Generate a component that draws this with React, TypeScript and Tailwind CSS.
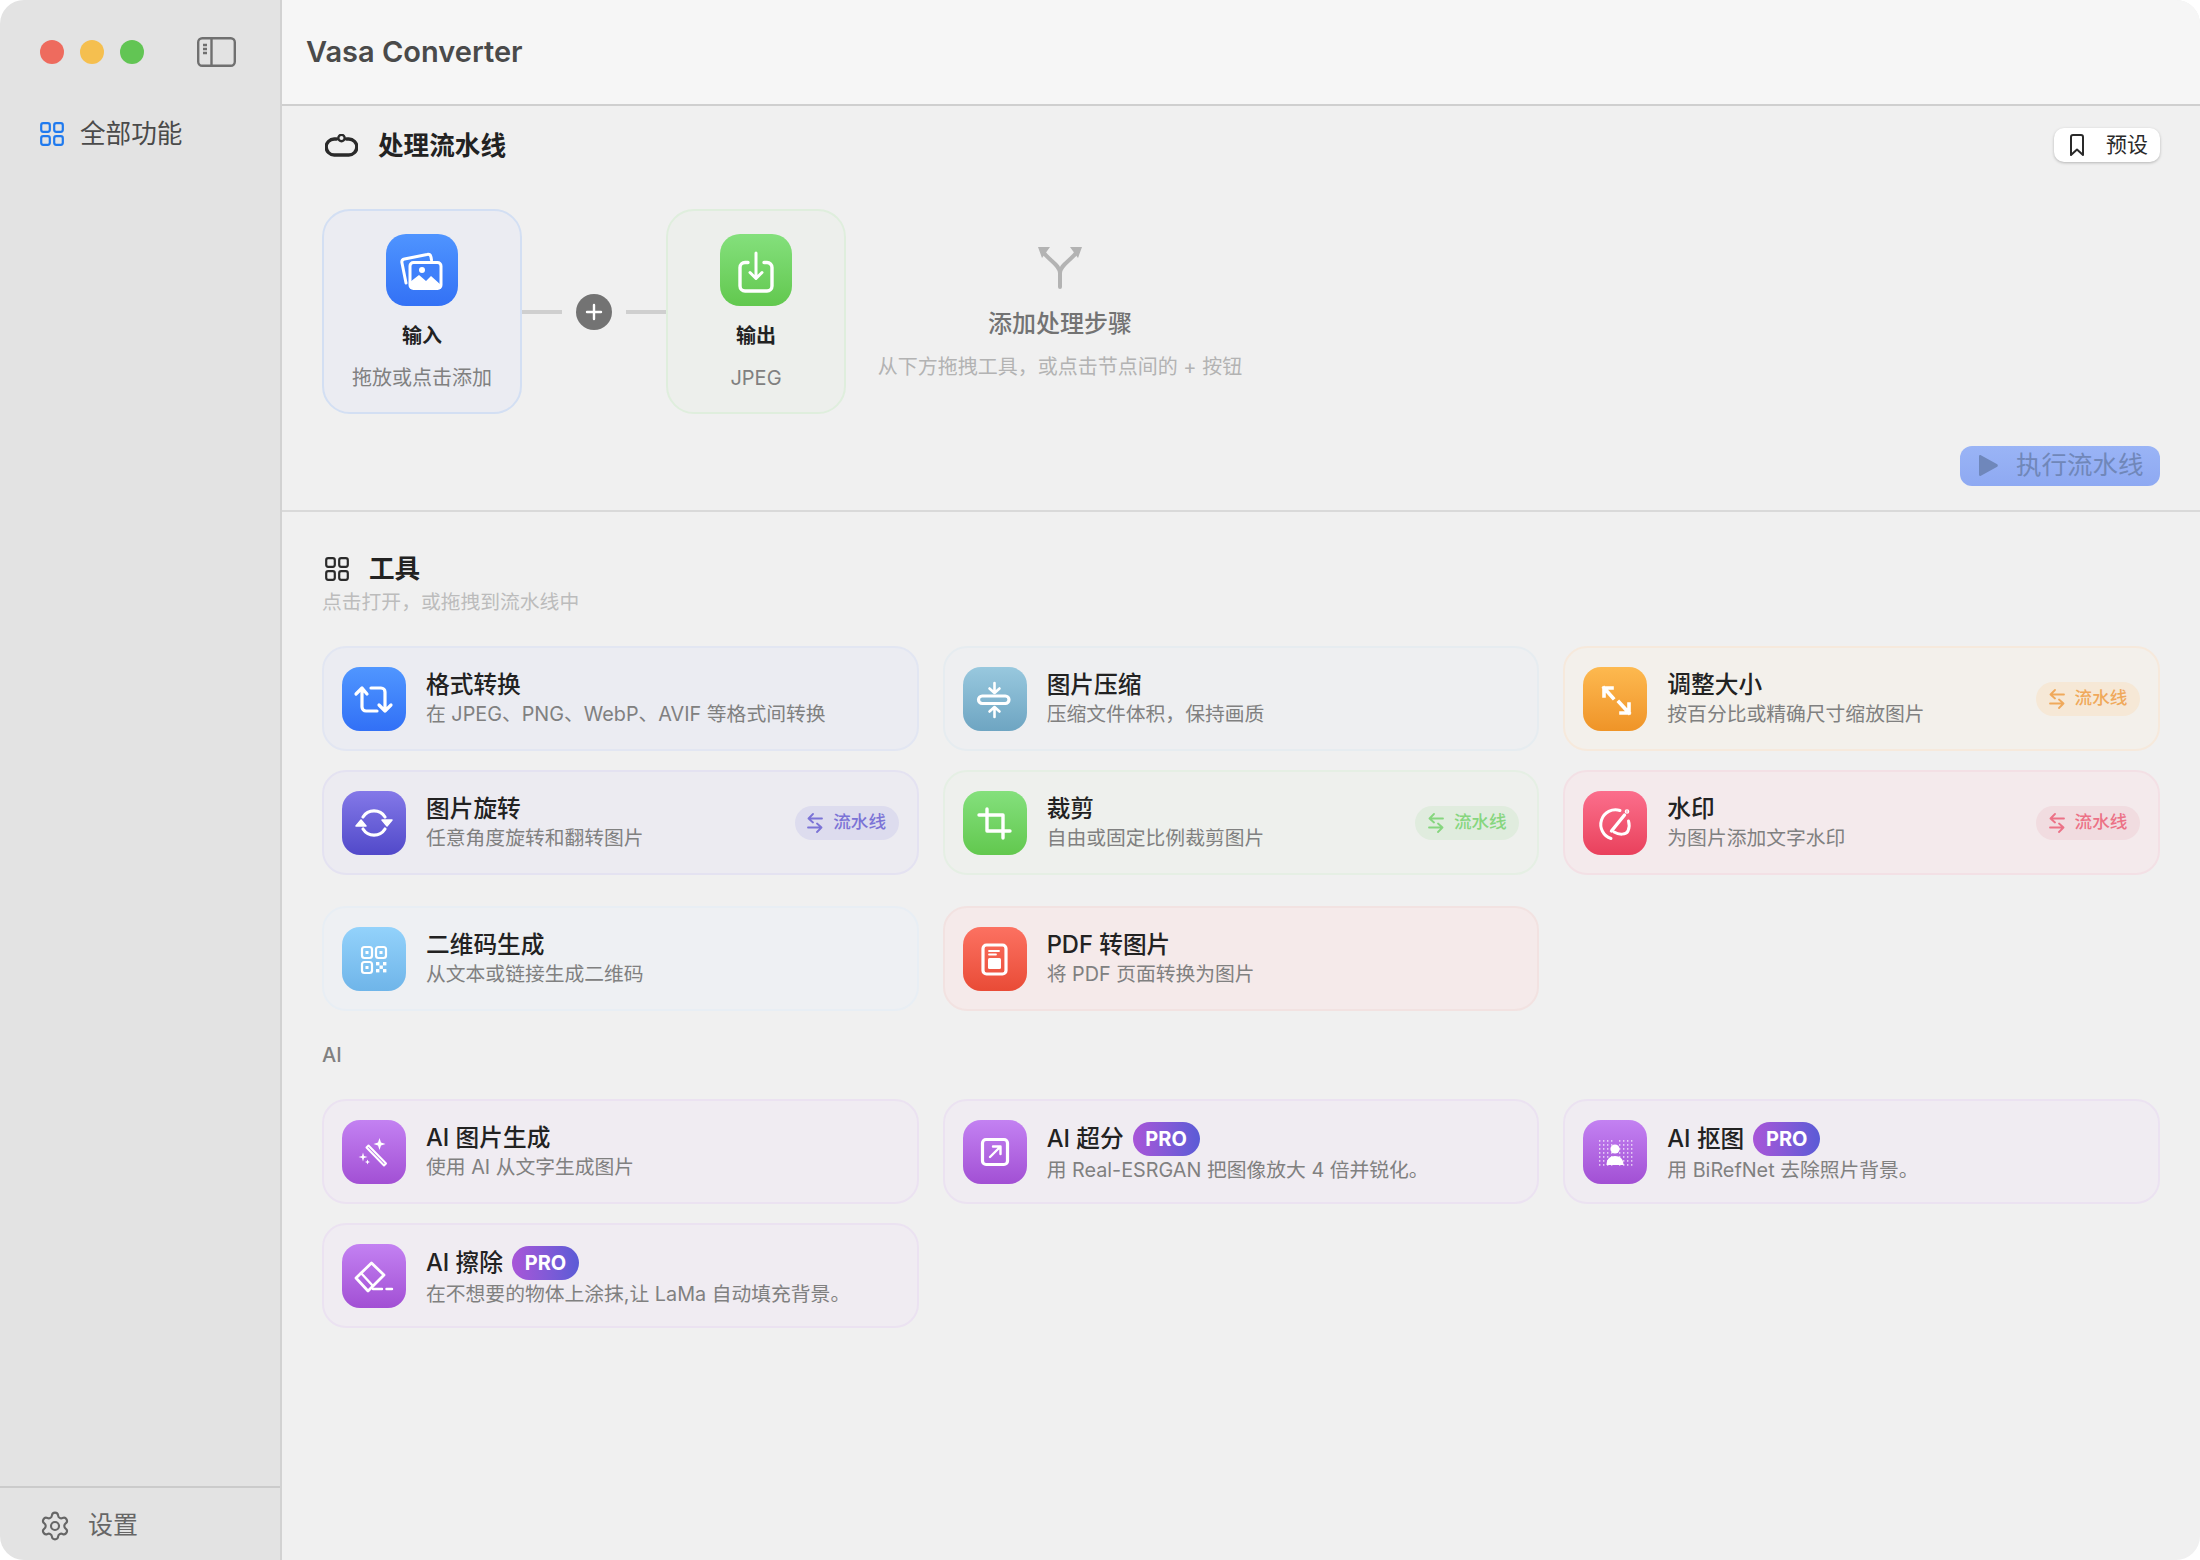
import type { ReactNode } from 'react';
import { Settings } from 'lucide-react';

type Tool = {
  title: string;
  desc: string;
  card: string;
  tile: string;
  icon: ReactNode;
  pipe?: string;
  pro?: boolean;
};

function Glyph({ children }: { children: ReactNode }) {
  return (
    <svg viewBox="0 0 64 64" className="h-16 w-16" fill="none" stroke="white" strokeWidth="3.2" strokeLinecap="round" strokeLinejoin="round">
      {children}
    </svg>
  );
}

function Grid4({ className }: { className: string }) {
  return (
    <svg viewBox="0 0 24 24" className={className} fill="none" stroke="currentColor" strokeWidth="2.2">
      <rect x="1.2" y="1.2" width="8.6" height="8.6" rx="2" />
      <rect x="14.2" y="1.2" width="8.6" height="8.6" rx="2" />
      <rect x="1.2" y="14.2" width="8.6" height="8.6" rx="2" />
      <rect x="14.2" y="14.2" width="8.6" height="8.6" rx="2" />
    </svg>
  );
}

function PipeArrows() {
  return (
    <svg viewBox="0 0 16 20" className="h-5 w-4" fill="none" stroke="currentColor" strokeWidth="1.8" strokeLinecap="round" strokeLinejoin="round">
      <path d="M6 1 1.5 5.5 6 9.5 M1.5 5.5H15 M10 10.5 14.5 14.5 10 19 M14.5 14.5H1" />
    </svg>
  );
}

const cutoutDots = [16, 20, 24, 28, 36, 40, 44, 48].flatMap((x) =>
  [20, 24, 28, 32, 36, 40, 44].map((y) => ({ x, y })),
);

const row1: Tool[] = [
  {
    title: '格式转换',
    desc: '在 JPEG、PNG、WebP、AVIF 等格式间转换',
    card: 'bg-[#ebecf2] border-[#e2e6f2]',
    tile: 'from-[#5096ff] to-[#3270f6]',
    icon: (
      <Glyph>
        <path d="M14 27 20 21 25 27 M20 21V40a4 4 0 0 0 4 4H35 M29 21H39a4 4 0 0 1 4 4V44 M37 38 43 44 49 38" />
      </Glyph>
    ),
  },
  {
    title: '图片压缩',
    desc: '压缩文件体积，保持画质',
    card: 'bg-[#eeeff1] border-[#e6ecf0]',
    tile: 'from-[#98c8de] to-[#6ea5c2]',
    icon: (
      <Glyph>
        <rect x="15.5" y="29" width="30.5" height="7.5" rx="3.7" />
        <path d="M31.5 16V26 M26.5 21.5 31.5 26 36.5 21.5 M31.5 50V40 M26.5 44.5 31.5 40 36.5 44.5" strokeWidth="2.6" />
      </Glyph>
    ),
  },
  {
    title: '调整大小',
    desc: '按百分比或精确尺寸缩放图片',
    card: 'bg-[#f3f0eb] border-[#f6e9dc]',
    tile: 'from-[#fdb94f] to-[#ef9427]',
    pipe: 'bg-[#f6e8d6] text-[#f0a95b]',
    icon: (
      <Glyph>
        <path d="M21 29V21H29 M21 21 30 31 M46 37V46H38 M46 46 36 35" strokeWidth="3.6" strokeLinecap="square" strokeLinejoin="miter" />
      </Glyph>
    ),
  },
  {
    title: '图片旋转',
    desc: '任意角度旋转和翻转图片',
    card: 'bg-[#ecebf1] border-[#e4e2f1]',
    tile: 'from-[#8478e8] to-[#5249c9]',
    pipe: 'bg-[#dddcee] text-[#7b73d6]',
    icon: (
      <Glyph>
        <path d="M21 26A13 13 0 0 1 43 26 M43 38A13 13 0 0 1 21 38" />
        <path d="M40 29H50L45 35Z M14 35H24L19 29Z" fill="white" strokeWidth="1.5" />
      </Glyph>
    ),
  },
  {
    title: '裁剪',
    desc: '自由或固定比例裁剪图片',
    card: 'bg-[#eef0ed] border-[#e5efe4]',
    tile: 'from-[#84e07c] to-[#62c84e]',
    pipe: 'bg-[#e0ecde] text-[#86d67e]',
    icon: (
      <Glyph>
        <path d="M24 18V40H47 M16 24H40V47" strokeWidth="3.4" />
      </Glyph>
    ),
  },
  {
    title: '水印',
    desc: '为图片添加文字水印',
    card: 'bg-[#f4eaec] border-[#f3e0e5]',
    tile: 'from-[#fb6e8c] to-[#e9405c]',
    pipe: 'bg-[#f1dce0] text-[#ec7186]',
    icon: (
      <Glyph>
        <path d="M37 19.5A14 14 0 0 0 28 47.5 M45.5 30A14 14 0 0 1 45 40C43 44 36 44 31 41" strokeWidth="3" />
        <path d="M28.5 40 41.5 24" strokeWidth="3.4" />
        <circle cx="44" cy="20.5" r="0.7" fill="white" />
      </Glyph>
    ),
  },
];

const qrAndPdf: Tool[] = [
  {
    title: '二维码生成',
    desc: '从文本或链接生成二维码',
    card: 'bg-[#eef0f3] border-[#e8eef4]',
    tile: 'from-[#93d2fb] to-[#6fb5e9]',
    icon: (
      <Glyph>
        <g strokeWidth="2.2">
          <rect x="20" y="20" width="10" height="11" rx="2.5" />
          <rect x="34" y="20" width="10" height="11" rx="2.5" />
          <rect x="20" y="35" width="10" height="11" rx="2.5" />
        </g>
        <g fill="white" stroke="none">
          <rect x="23.5" y="24" width="3" height="3" />
          <rect x="37.5" y="24" width="3" height="3" />
          <rect x="23.5" y="39" width="3" height="3" />
          <rect x="34" y="35" width="3.4" height="3.4" />
          <rect x="41" y="35" width="3.4" height="3.4" />
          <rect x="37.5" y="38.5" width="3.4" height="3.4" />
          <rect x="34" y="42" width="3.4" height="3.4" />
          <rect x="41" y="42" width="3.4" height="3.4" />
        </g>
      </Glyph>
    ),
  },
  {
    title: 'PDF 转图片',
    desc: '将 PDF 页面转换为图片',
    card: 'bg-[#f5eaea] border-[#f2e2e1]',
    tile: 'from-[#fc7161] to-[#e94b36]',
    icon: (
      <Glyph>
        <rect x="20" y="18" width="23" height="29" rx="3.5" />
        <path d="M26 24H36 M26 27.5H33" strokeWidth="1.8" />
        <rect x="25" y="31" width="13" height="11" rx="1.5" fill="white" stroke="none" />
      </Glyph>
    ),
  },
];

const aiCard = 'bg-[#f0ecf2] border-[#ebe2f1]';
const aiTile = 'from-[#c381f2] to-[#a24fd4]';

const aiTools: Tool[] = [
  {
    title: 'AI 图片生成',
    desc: '使用 AI 从文字生成图片',
    card: aiCard,
    tile: aiTile,
    icon: (
      <Glyph>
        <path d="M24.5 27.5 26.5 25.5 44 43.5 42 45.5Z" strokeWidth="2" />
        <path d="M37.5 18 39 22.5 43.5 24 39 25.5 37.5 30 36 25.5 31.5 24 36 22.5Z M21 32.5 22 36 25.5 37 22 38 21 41.5 20 38 16.5 37 20 36Z M25.5 39.5 26.2 41.3 28 42 26.2 42.7 25.5 44.5 24.8 42.7 23 42 24.8 41.3Z" fill="white" stroke="none" />
      </Glyph>
    ),
  },
  {
    title: 'AI 超分',
    desc: '用 Real-ESRGAN 把图像放大 4 倍并锐化。',
    card: aiCard,
    tile: aiTile,
    pro: true,
    icon: (
      <Glyph>
        <rect x="19.5" y="19.5" width="25" height="25" rx="3.5" />
        <path d="M27 37 37 27 M30 26.5H37.5V34" strokeWidth="2.4" />
      </Glyph>
    ),
  },
  {
    title: 'AI 抠图',
    desc: '用 BiRefNet 去除照片背景。',
    card: aiCard,
    tile: aiTile,
    pro: true,
    icon: (
      <Glyph>
        <g fill="white" stroke="none">
          {cutoutDots.map((d) => (
            <rect key={`${d.x}-${d.y}`} x={d.x} y={d.y} width="1.4" height="1.8" opacity="0.65" />
          ))}
          <circle cx="32" cy="29" r="4.6" />
          <path d="M23.5 45C23.5 39 27 36 32 36S40.5 39 40.5 45Z" />
        </g>
      </Glyph>
    ),
  },
  {
    title: 'AI 擦除',
    desc: '在不想要的物体上涂抹,让 LaMa 自动填充背景。',
    card: aiCard,
    tile: aiTile,
    pro: true,
    icon: (
      <Glyph>
        <path d="M14 34 29.5 19 42 31 26 47Z" strokeWidth="2.8" />
        <path d="M19 29 31 42" strokeWidth="2.4" />
        <path d="M31 45H40 M44.5 45H50" strokeWidth="2.4" />
      </Glyph>
    ),
  },
];

function ToolCard({ tool }: { tool: Tool }) {
  return (
    <div className={`flex h-[105px] items-center gap-5 rounded-[24px] border-2 px-[18px] ${tool.card}`}>
      <div className={`flex h-16 w-16 shrink-0 items-center justify-center rounded-[18px] bg-gradient-to-b ${tool.tile}`}>
        {tool.icon}
      </div>
      <div className={`min-w-0 flex-1 ${tool.pro ? 'pt-[2px]' : 'pt-[1px]'}`}>
        <div className={`flex items-center gap-[9px] ${tool.pro ? 'h-[34px]' : 'h-[30px]'}`}>
          <span className="text-[23.7px] font-medium leading-[30px] text-[#222222]">{tool.title}</span>
          {tool.pro && (
            <span className="w-[67px] rounded-full bg-gradient-to-r from-[#a855d8] to-[#5a5bd6] text-center text-[20px] font-bold leading-[34px] text-white">
              PRO
            </span>
          )}
        </div>
        <div className="text-[19.8px] leading-[28px] text-[#808080]">{tool.desc}</div>
      </div>
      {tool.pipe && (
        <div className={`flex h-[34px] w-[104px] shrink-0 items-center justify-center gap-[10px] rounded-full text-[17.6px] font-medium ${tool.pipe}`}>
          <PipeArrows />
          <span>流水线</span>
        </div>
      )}
    </div>
  );
}

function NodeCard({ width, card, tile, icon, title, sub }: { width: string; card: string; tile: string; icon: ReactNode; title: string; sub: string }) {
  return (
    <div className={`flex h-[205px] shrink-0 flex-col items-center rounded-[28px] border-2 pt-[23px] ${width} ${card}`}>
      <div className={`flex h-[72px] w-[72px] items-center justify-center rounded-[20px] bg-gradient-to-b ${tile}`}>{icon}</div>
      <div className="mt-4 text-[20px] font-semibold leading-[28px] text-[#222222]">{title}</div>
      <div className="mt-[14px] whitespace-nowrap text-[20px] leading-[28px] text-[#808080]">{sub}</div>
    </div>
  );
}

export default function App() {
  return (
    <div className="h-[1560px] w-[2200px] bg-white font-['Inter','Noto_Sans_CJK_SC',sans-serif]">
      <div className="flex h-full overflow-hidden rounded-[24px]">
        <aside className="flex w-[282px] shrink-0 flex-col border-r-2 border-[#d2d2d2] bg-[#e3e3e3]">
          <div className="flex h-[104px] items-center pl-10">
            <span className="h-6 w-6 rounded-full bg-[#ee6b5e]" />
            <span className="ml-4 h-6 w-6 rounded-full bg-[#f5bf4f]" />
            <span className="ml-4 h-6 w-6 rounded-full bg-[#62c554]" />
            <svg viewBox="0 0 39 30" className="ml-[53px] h-[30px] w-[39px]" fill="none" stroke="#707070" strokeWidth="2.4">
              <rect x="1.2" y="1.2" width="36.6" height="27.6" rx="4" />
              <path d="M14.5 1.2V28.8 M6 8H10 M6 12H10 M6 16H10" />
            </svg>
          </div>
          <div className="flex items-center gap-4 pl-10 pt-[15px]">
            <Grid4 className="h-6 w-6 text-[#1f7aef]" />
            <span className="text-[25.6px] leading-[30px] text-[#4a4a4a]">全部功能</span>
          </div>
          <div className="flex-1" />
          <div className="flex h-[74px] items-center gap-[17px] border-t-2 border-[#cbcbcb] pl-[39px] pt-[3px]">
            <Settings className="h-8 w-8 text-[#666666]" strokeWidth={1.6} />
            <span className="text-[25px] text-[#666666]">设置</span>
          </div>
        </aside>

        <main className="flex min-w-0 flex-1 flex-col bg-[#f0f0f0]">
          <header className="flex h-[106px] items-center border-b-2 border-[#cfcfcf] bg-[#f6f6f6] pl-6">
            <h1 className="text-[29px] font-semibold text-[#4a4a4a]">Vasa Converter</h1>
          </header>

          <section className="border-b-2 border-[#d9d9d9] px-10 pb-6 pt-[22px]">
            <div className="flex h-[34px] items-center justify-between">
              <div className="flex items-center gap-5 pl-[3px]">
                <svg viewBox="0 0 33 23" className="h-[23px] w-[33px]" fill="none" stroke="#2a2a2a" strokeWidth="3.4" strokeLinecap="round">
                  <path d="M11.5 5H9.2A7.75 7.75 0 0 0 9.2 21H23.8A7.75 7.75 0 0 0 23.8 5H21.5" />
                  <circle cx="16.5" cy="4" r="3.2" strokeWidth="2.4" />
                </svg>
                <span className="mt-[2px] text-[25.6px] font-bold leading-[30px] text-[#222222]">处理流水线</span>
              </div>
              <button className="flex h-[34px] w-[106px] items-center gap-[22px] rounded-[10px] bg-white pl-4 text-[21px] text-[#2a2a2a] shadow-[0_1px_3px_rgba(0,0,0,0.25)]">
                <svg viewBox="0 0 14 22" className="h-[22px] w-[14px]" fill="none" stroke="#2a2a2a" strokeWidth="2" strokeLinejoin="round">
                  <path d="M1 3A2 2 0 0 1 3 1H11A2 2 0 0 1 13 3V21L7 15.5 1 21Z" />
                </svg>
                <span>预设</span>
              </button>
            </div>

            <div className="mt-[47px] flex items-start">
              <NodeCard
                width="w-[200px]"
                card="bg-[#ebecf2] border-[#d3dff3]"
                tile="from-[#4f94ff] to-[#3371f5]"
                title="输入"
                sub="拖放或点击添加"
                icon={
                  <svg viewBox="0 0 72 72" className="h-[72px] w-[72px]" fill="none" stroke="white" strokeWidth="3" strokeLinejoin="round" strokeLinecap="round">
                    <path d="M20 49 16 29C15.5 27 16.5 25.5 18.5 25L41 20.5C43 20 44.5 21 45 23L45.5 26" />
                    <rect x="24" y="28.5" width="31" height="26" rx="3.5" fill="#3f80fa" />
                    <path d="M24 54.5V48L33 41 40 47 45 42 55 51V54.5Z" fill="white" stroke="none" />
                    <circle cx="36" cy="36" r="3" fill="white" stroke="none" />
                  </svg>
                }
              />
              <div className="mt-[101px] h-1 w-10 bg-[#cfcfcf]" />
              <div className="mx-[14px] mt-[85px] flex h-9 w-9 items-center justify-center rounded-full bg-[#737373]">
                <svg viewBox="0 0 18 18" className="h-[18px] w-[18px]" stroke="white" strokeWidth="2.4" strokeLinecap="round">
                  <path d="M9 2V16 M2 9H16" />
                </svg>
              </div>
              <div className="mt-[101px] h-1 w-10 bg-[#cfcfcf]" />
              <NodeCard
                width="w-[180px]"
                card="bg-[#edefec] border-[#dfeedd]"
                tile="from-[#84e07c] to-[#62c84e]"
                title="输出"
                sub="JPEG"
                icon={
                  <svg viewBox="0 0 72 72" className="h-[72px] w-[72px]" fill="none" stroke="white" strokeWidth="3.4" strokeLinecap="round" strokeLinejoin="round">
                    <path d="M28 28.5H25A5 5 0 0 0 20 33.5V52A5 5 0 0 0 25 57H47A5 5 0 0 0 52 52V33.5A5 5 0 0 0 47 28.5H44" />
                    <path d="M36 19V44 M30 38.5 36 44.5 42 38.5" strokeWidth="3" />
                  </svg>
                }
              />
              <div className="flex w-[428px] flex-col items-center pt-[38px]">
                <svg viewBox="0 0 44 42" className="h-[42px] w-[44px]" fill="none" stroke="#b3b3b3" strokeWidth="4" strokeLinecap="round">
                  <path d="M22 40V26C22 18 12 14 6 6 M22 26C22 18 32 14 38 6" />
                  <path d="M0 0H12L4 11Z M44 0H32L40 11Z" fill="#b3b3b3" stroke="none" />
                </svg>
                <div className="mt-5 text-[24px] font-medium leading-[30px] text-[#737373]">添加处理步骤</div>
                <div className="mt-[14px] whitespace-nowrap text-[20px] leading-[28px] text-[#b3b3b3]">从下方拖拽工具，或点击节点间的 + 按钮</div>
              </div>
            </div>

            <div className="mt-8 flex justify-end">
              <button className="flex h-10 w-[200px] items-center gap-[18px] rounded-xl bg-gradient-to-b from-[#9ab4f6] to-[#8ea9f2] pb-[2px] pl-[19px] text-[25.5px] text-[#7087b9]">
                <svg viewBox="0 0 19 21" className="h-[21px] w-[19px]" fill="#6f87bb">
                  <path d="M0 1.2C0 .2 1 -.3 1.9 .2L18.2 9.3C19 9.8 19 11.2 18.2 11.7L1.9 20.8C1 21.3 0 20.8 0 19.8Z" />
                </svg>
                <span>执行流水线</span>
              </button>
            </div>
          </section>

          <section className="px-10 pt-[42px]">
            <div className="flex h-[30px] items-center gap-5 pl-[3px]">
              <Grid4 className="h-6 w-6 text-[#2a2a2a]" />
              <span className="text-[25.6px] font-bold leading-[30px] text-[#222222]">工具</span>
            </div>
            <div className="mt-1 text-[19.8px] leading-[28px] text-[#bcbcbc]">点击打开，或拖拽到流水线中</div>

            <div className="mt-[30px] grid grid-cols-3 gap-x-6 gap-y-[19px]">
              {row1.map((t) => (
                <ToolCard key={t.title} tool={t} />
              ))}
            </div>
            <div className="mt-[31px] grid grid-cols-3 gap-x-6">
              {qrAndPdf.map((t) => (
                <ToolCard key={t.title} tool={t} />
              ))}
            </div>

            <div className="mt-[30px] text-[20px] font-medium leading-[28px] text-[#808080]">AI</div>
            <div className="mt-[30px] grid grid-cols-3 gap-x-6 gap-y-[19px]">
              {aiTools.map((t) => (
                <ToolCard key={t.title} tool={t} />
              ))}
            </div>
          </section>
        </main>
      </div>
    </div>
  );
}
